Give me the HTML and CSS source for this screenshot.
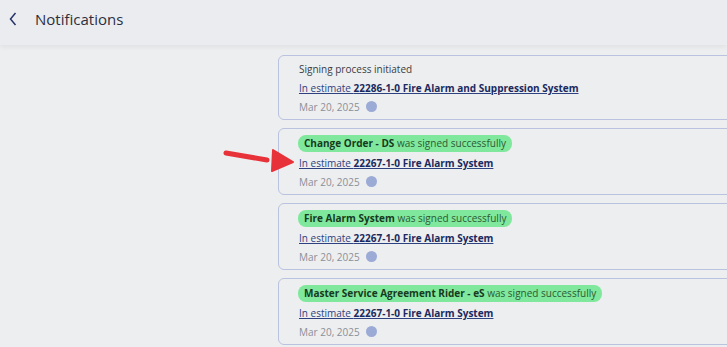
FILE: index.html
```html
<!DOCTYPE html>
<html lang="en">
<head>
  <meta charset="UTF-8" />
  <title>Notifications</title>
  <link rel="stylesheet" href="styles.css">
</head>
<body>
  <div class="header">
    <svg class="back" width="10" height="16" viewBox="0 0 10 16"><path d="M7.5 2 L2.5 8 L7.5 14" fill="none" stroke="#26336b" stroke-width="1.5"/></svg>
    <span class="title">Notifications</span>
  </div>

  <div class="list">
    <div class="card">
      <div class="msg">Signing process initiated</div>
      <a class="link" href="#">In estimate <b>22286-1-0 Fire Alarm and Suppression System</b></a>
      <div class="meta">Mar 20, 2025 <span class="dot"></span></div>
    </div>
    <div class="card">
      <div class="msg tall"><span class="pill"><b>Change Order - DS</b> was signed successfully</span></div>
      <a class="link" href="#">In estimate <b>22267-1-0 Fire Alarm System</b></a>
      <div class="meta">Mar 20, 2025 <span class="dot"></span></div>
      <!-- callout arrow -->
      <svg class="arrow" width="76" height="28" viewBox="0 0 76 28">
        <path d="M5 7 L46 14" stroke="#e8323a" stroke-width="5" stroke-linecap="round"/>
        <path d="M52 4 L72 16 L51 25 Z" fill="#e8323a" stroke="#e8323a" stroke-width="2" stroke-linejoin="round"/>
      </svg>
    </div>
    <div class="card">
      <div class="msg tall"><span class="pill"><b>Fire Alarm System</b> was signed successfully</span></div>
      <a class="link" href="#">In estimate <b>22267-1-0 Fire Alarm System</b></a>
      <div class="meta">Mar 20, 2025 <span class="dot"></span></div>
    </div>
    <div class="card">
      <div class="msg tall"><span class="pill"><b>Master Service Agreement Rider - eS</b> was signed successfully</span></div>
      <a class="link" href="#">In estimate <b>22267-1-0 Fire Alarm System</b></a>
      <div class="meta">Mar 20, 2025 <span class="dot"></span></div>
    </div>
  </div>
</body>
</html>
```

FILE: styles.css
```css
body {
  margin: 0;
  background: #edeef0;
  font-family: 'Open Sans', 'Noto Sans', sans-serif;
  overflow: hidden;
  height: 347px;
}
.header {
  height: 45px;
  display: flex;
  align-items: center;
  background: #ebecef;
  box-shadow: 0 2px 5px rgba(0,0,0,0.06);
  position: relative;
  z-index: 1;
}
.back {
  margin-left: 8px;
  margin-right: 17px;
  margin-top: -7px;
}
.title {
  font-size: 15px;
  color: #2b2f40;
  margin-top: -7px;
}
.list {
  margin-left: 278px;
  width: 600px;
  display: flex;
  flex-direction: column;
  gap: 8px;
  padding-top: 10px;
}
.card {
  position: relative;
  border: 1px solid #b9c3df;
  border-radius: 6px;
  padding: 4px 20px 2px;
  display: flex;
  flex-direction: column;
  align-items: flex-start;
}
.msg {
  font-size: 10px;
  color: #3a3d44;
  line-height: 19px;
}
.msg.tall {
  line-height: 21px;
}
.pill {
  display: inline-block;
  background: #80e89c;
  color: #2a5a35;
  border-radius: 8px;
  padding: 0 6px;
  line-height: 17px;
  margin-left: -1px;
}
.pill b {
  color: #163a20;
}
.link {
  font-size: 10px;
  color: #2e4180;
  text-decoration: underline;
  line-height: 19px;
}
.link b {
  color: #1a2a5e;
}
.meta {
  font-size: 10px;
  color: #8b8f97;
  line-height: 19px;
  display: flex;
  align-items: center;
  gap: 6px;
}
.dot {
  width: 11px;
  height: 11px;
  border-radius: 50%;
  background: #9babd6;
  display: inline-block;
  margin-top: -2px;
}
.arrow {
  position: absolute;
  left: -58px;
  top: 17px;
}
```
